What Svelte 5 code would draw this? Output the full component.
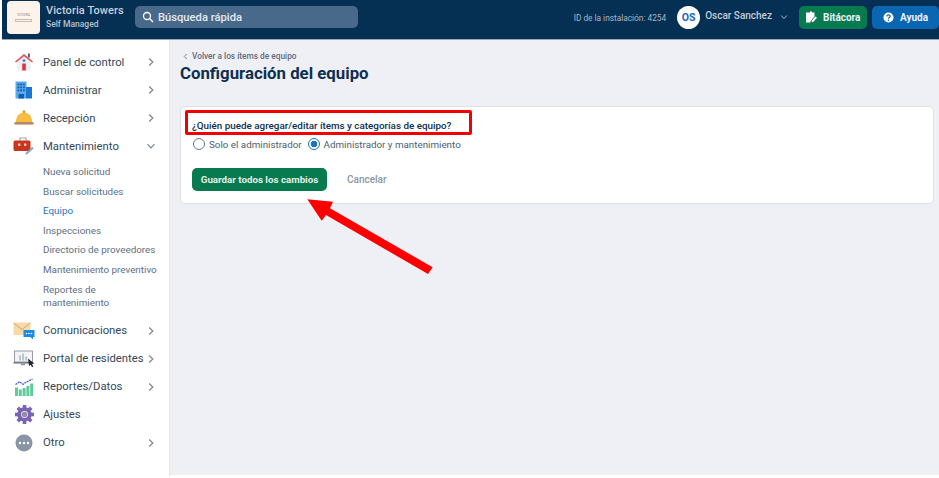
<script>
  const sub = [
    { label: 'Nueva solicitud' },
    { label: 'Buscar solicitudes' },
    { label: 'Equipo', active: true },
    { label: 'Inspecciones' },
    { label: 'Directorio de proveedores' },
    { label: 'Mantenimiento preventivo' },
    { label: 'Reportes de mantenimiento' }
  ];
</script>

{#snippet chevron(open = false)}
  <svg class="chev" class:open viewBox="0 0 10 10" width="10" height="10">
    <path d="M3.2 1.5 L6.8 5 L3.2 8.5" fill="none" stroke="#7b8794" stroke-width="1.2" />
  </svg>
{/snippet}

{#snippet navRow(label, arrow, open, icon)}
  <div class="nav-row">
    <span class="nav-icon">{@render icon()}</span>
    <span class="nav-label">{label}</span>
    {#if arrow}{@render chevron(open)}{/if}
  </div>
{/snippet}

{#snippet homeIcon()}
  <svg viewBox="0 0 20 18" width="20" height="18">
    <rect x="14" y="0.5" width="1.8" height="4" fill="#555" />
    <path d="M3.5 8 L10 2.5 L16.5 8 V17.5 H3.5 Z" fill="#eef0f2" />
    <path d="M1 8.4 L10 1 L19 8.4 L18 9.6 L10 3.2 L2 9.6 Z" fill="#e2505c" />
    <rect x="8.2" y="10.5" width="3.6" height="7" fill="#df3341" />
    <circle cx="10" cy="7.6" r="1.4" fill="#2c86d1" />
  </svg>
{/snippet}
{#snippet buildingIcon()}
  <svg viewBox="0 0 18 18" width="18" height="18">
    <rect x="0.5" y="0.5" width="11" height="17" fill="#5aa9ea" />
    <rect x="11" y="6" width="6" height="11.5" fill="#1976d2" />
    <g fill="#0f5fae">
      <rect x="2.5" y="2.5" width="1.8" height="1.8" /><rect x="5.2" y="2.5" width="1.8" height="1.8" /><rect x="8" y="2.5" width="1.8" height="1.8" />
      <rect x="2.5" y="5.5" width="1.8" height="1.8" /><rect x="5.2" y="5.5" width="1.8" height="1.8" /><rect x="8" y="5.5" width="1.8" height="1.8" />
      <rect x="2.5" y="8.5" width="1.8" height="1.8" /><rect x="5.2" y="8.5" width="1.8" height="1.8" /><rect x="8" y="8.5" width="1.8" height="1.8" />
      <rect x="3.5" y="13" width="5.5" height="4.5" />
    </g>
  </svg>
{/snippet}
{#snippet bellIcon()}
  <svg viewBox="0 0 20 16" width="20" height="16">
    <rect x="8.8" y="0.5" width="2.4" height="2.5" fill="#c99526" />
    <path d="M2 12 C2 6 5.5 2.6 10 2.6 C14.5 2.6 18 6 18 12 Z" fill="#f6bd41" />
    <rect x="0.5" y="12" width="19" height="2.6" fill="#b98a66" />
  </svg>
{/snippet}
{#snippet toolboxIcon()}
  <svg viewBox="0 0 22 18" width="22" height="18">
    <path d="M7 3.5 V1 H13 V3.5" fill="none" stroke="#9aa7b5" stroke-width="1.2" />
    <rect x="0.5" y="3.5" width="17" height="10.5" rx="1.5" fill="#c9341f" />
    <rect x="5" y="6.5" width="2.4" height="2.4" fill="#f2c9b8" />
    <rect x="11" y="6.5" width="2.4" height="2.4" fill="#f2c9b8" />
    <path d="M13 17 L20 10.5" stroke="#8fa6bf" stroke-width="2.2" />
  </svg>
{/snippet}
{#snippet mailIcon()}
  <svg viewBox="0 0 22 18" width="22" height="18">
    <rect x="0.5" y="0.5" width="17" height="12.5" fill="#f8d9a8" />
    <path d="M0.5 1 L9 7.5 L17.5 1" fill="none" stroke="#c9a26e" stroke-width="0.9" />
    <path d="M10.5 8 H21.5 V15 H20 V17.5 L17.5 15 H10.5 Z" fill="#1a8ae5" />
    <g fill="#fff"><circle cx="13.5" cy="11.5" r="0.8" /><circle cx="16" cy="11.5" r="0.8" /><circle cx="18.5" cy="11.5" r="0.8" /></g>
  </svg>
{/snippet}
{#snippet portalIcon()}
  <svg viewBox="0 0 22 18" width="22" height="18">
    <rect x="1.5" y="1" width="18" height="11" fill="#f3f4f6" stroke="#8a929b" stroke-width="0.9" />
    <g fill="#bcc4cd"><rect x="6" y="5.5" width="2" height="5" /><rect x="9" y="3.5" width="2" height="7" /><rect x="12" y="6.5" width="2" height="4" /></g>
    <rect x="0.5" y="12" width="20" height="1.6" fill="#77808a" />
    <rect x="8" y="13.6" width="4" height="1.6" fill="#8a929b" />
    <path d="M15 8.5 L21 13.5 L19 14 L20.3 16.6 L19 17.2 L17.7 14.7 L16 16 Z" fill="#20262c" />
  </svg>
{/snippet}
{#snippet chartIcon()}
  <svg viewBox="0 0 20 18" width="20" height="18">
    <g fill="#5fcb9c">
      <rect x="1" y="9.5" width="3" height="8.5" /><rect x="4.8" y="11.5" width="3" height="6.5" /><rect x="8.6" y="10" width="3" height="8" />
      <rect x="12.4" y="8" width="3" height="10" /><rect x="16.2" y="5.5" width="3" height="12.5" />
    </g>
    <path d="M1.5 6.5 L5.5 3.8 L9 6.2 L13.5 3.5 L18.5 1" fill="none" stroke="#2f55c0" stroke-width="1.2" stroke-dasharray="2 0.7" />
  </svg>
{/snippet}
{#snippet gearIcon()}
  <svg viewBox="0 0 20 20" width="19" height="19">
    <circle cx="10" cy="10" r="5.6" fill="#f2eff8" stroke="#7a62b4" stroke-width="4" />
    <circle cx="10" cy="10" r="2.8" fill="#3f3a5c" opacity="0.55" />
    <g stroke="#7a62b4" stroke-width="3.8">
      <path d="M10 0 V4" /><path d="M10 16 V20" /><path d="M0 10 H4" /><path d="M16 10 H20" />
      <path d="M2.9 2.9 L5.8 5.8" /><path d="M14.2 14.2 L17.1 17.1" /><path d="M2.9 17.1 L5.8 14.2" /><path d="M14.2 5.8 L17.1 2.9" />
    </g>
  </svg>
{/snippet}
{#snippet dotsIcon()}
  <svg viewBox="0 0 18 18" width="18" height="18">
    <circle cx="9" cy="9" r="8.5" fill="#8995a5" />
    <g fill="#fff"><circle cx="5" cy="9" r="1.2" /><circle cx="9" cy="9" r="1.2" /><circle cx="13" cy="9" r="1.2" /></g>
  </svg>
{/snippet}

<div class="page">
  <header class="topbar">
    <div class="logo">
      <span class="logo-name">VICTORIA</span>
      <span class="logo-sub"></span>
    </div>
    <div class="org">
      <div class="org-name">Victoria Towers</div>
      <div class="org-type">Self Managed</div>
    </div>
    <div class="search">
      <svg viewBox="0 0 12 12" width="12" height="12">
        <circle cx="5" cy="5" r="3.5" fill="none" stroke="#fff" stroke-width="1.3" />
        <path d="M7.6 7.6 L11 11" stroke="#fff" stroke-width="1.4" />
      </svg>
      <span>Búsqueda rápida</span>
    </div>
    <div class="spacer"></div>
    <span class="install">ID de la instalación: 4254</span>
    <span class="avatar">OS</span>
    <span class="user">Oscar Sanchez</span>
    <svg class="user-chev" viewBox="0 0 10 10" width="8" height="8">
      <path d="M1.5 3.2 L5 6.8 L8.5 3.2" fill="none" stroke="#b9c4d0" stroke-width="1.2" />
    </svg>
    <div class="btn-top green">
      <svg viewBox="0 0 12 12" width="12" height="12">
        <path d="M1 1.5 H5 V0.6 H7 V1.5 H9.5 V5.5 L5.5 10 V11.5 H1 Z" fill="#fff" />
        <path d="M6.6 11.3 L7 9.2 L10.6 5.4 L12 6.8 L8.4 10.7 Z" fill="#fff" />
      </svg>
      <span>Bitácora</span>
    </div>
    <div class="btn-top blue">
      <svg viewBox="0 0 12 12" width="11" height="11">
        <circle cx="6" cy="6" r="5.5" fill="#fff" />
        <path d="M4.2 4.8 C4.2 2.6 7.9 2.6 7.9 4.7 C7.9 6 6 6 6 7.4" fill="none" stroke="#0b66b2" stroke-width="1.3" />
        <circle cx="6" cy="9.1" r="0.8" fill="#0b66b2" />
      </svg>
      <span>Ayuda</span>
    </div>
  </header>

  <div class="body">
    <aside class="sidebar">
      {@render navRow('Panel de control', true, false, homeIcon)}
      {@render navRow('Administrar', true, false, buildingIcon)}
      {@render navRow('Recepción', true, false, bellIcon)}
      {@render navRow('Mantenimiento', true, true, toolboxIcon)}
      <ul class="subnav">
        {#each sub as item}
          <li class:active={item.active}>{item.label}</li>
        {/each}
      </ul>
      {@render navRow('Comunicaciones', true, false, mailIcon)}
      {@render navRow('Portal de residentes', true, false, portalIcon)}
      {@render navRow('Reportes/Datos', true, false, chartIcon)}
      {@render navRow('Ajustes', false, false, gearIcon)}
      {@render navRow('Otro', true, false, dotsIcon)}
    </aside>

    <main class="content">
      <div class="back">
        <svg viewBox="0 0 6 8" width="5" height="7">
          <path d="M4.5 1 L1.5 4 L4.5 7" fill="none" stroke="#5f6b7a" stroke-width="1" />
        </svg>
        <span>Volver a los ítems de equipo</span>
      </div>
      <h1>Configuración del equipo</h1>
      <section class="card">
        <p class="question">¿Quién puede agregar/editar ítems y categorías de equipo?</p>
        <div class="radios">
          <span class="radio"></span>
          <span class="radio-label">Solo el administrador</span>
          <span class="radio checked"></span>
          <span class="radio-label">Administrador y mantenimiento</span>
        </div>
        <div class="actions">
          <div class="save">Guardar todos los cambios</div>
          <div class="cancel">Cancelar</div>
        </div>
      </section>
    </main>
  </div>

  <div class="callout"></div>
  <svg class="arrow" viewBox="0 0 939 478" width="939" height="478">
    <path d="M307.3 199.3 L333 201.7 L330 208.3 L432.7 267.3 L428 274 L326 215 L321.7 220.7 Z" fill="#fe0000" />
  </svg>
</div>

<style>
  :global(body) {
    margin: 0;
    background: #fff;
  }

  .page {
    position: relative;
    width: 939px;
    height: 478px;
    overflow: hidden;
    font-family: Roboto, "Liberation Sans", sans-serif;
    background: #fff;
  }

  .topbar {
    display: flex;
    align-items: center;
    height: 34px;
    margin-left: 2px;
    padding-bottom: 5px;
    background: #062f54;
    border-bottom: 1px solid #9aa7b4;
    box-sizing: content-box;
  }

  .logo {
    display: flex;
    flex-direction: column;
    align-items: center;
    justify-content: center;
    gap: 2px;
    box-sizing: border-box;
    width: 33px;
    height: 33px;
    margin-left: 5px;
    background: #fdf3ea;
    border-radius: 4px;
  }

  .logo-name {
    font-size: 3px;
    color: #8b8580;
  }

  .logo-sub {
    width: 17px;
    height: 3px;
    border: 1px solid #c9bdb3;
    box-sizing: border-box;
  }

  .org {
    width: 89px;
    margin-left: 6px;
  }

  .org-name {
    font-size: 11px;
    font-weight: 500;
    color: #c6d0da;
    letter-spacing: 0.1px;
    line-height: 14px;
  }

  .org-type {
    font-size: 8.5px;
    font-weight: 500;
    color: #b6c2ce;
    line-height: 13px;
  }

  .search {
    display: flex;
    align-items: center;
    gap: 4px;
    box-sizing: border-box;
    width: 223px;
    height: 22px;
    padding-left: 7px;
    background: #48698a;
    border-radius: 5px;
    color: #e4e9ef;
    font-size: 11.2px;
    font-weight: 500;
  }

  .spacer {
    flex: 1;
  }

  .install {
    font-size: 8.3px;
    color: #a9b6c3;
    margin-top: 2px;
  }

  .avatar {
    display: flex;
    align-items: center;
    justify-content: center;
    width: 23px;
    height: 23px;
    margin-left: 11px;
    border-radius: 50%;
    background: #fff;
    color: #1769b5;
    font-size: 10.5px;
    font-weight: 700;
  }

  .user {
    margin-left: 5px;
    font-size: 10px;
    font-weight: 500;
    color: #c3cdd8;
    margin-top: -3px;
  }

  .user-chev {
    margin: 0 11px 0 8px;
  }

  .btn-top {
    display: flex;
    align-items: center;
    gap: 6px;
    box-sizing: border-box;
    height: 23px;
    border-radius: 5px;
    color: #e9f1f6;
    font-size: 10px;
    font-weight: 700;
  }

  .btn-top.green {
    width: 68px;
    padding-left: 6px;
    background: #077a4f;
  }

  .btn-top.blue {
    width: 67px;
    margin-left: 5px;
    padding-left: 11px;
    background: #0b66b2;
  }

  .body {
    display: flex;
    height: 436px;
  }

  .sidebar {
    box-sizing: border-box;
    width: 170px;
    padding-top: 8px;
    background: #fff;
    border-right: 1px solid #e3e5ea;
  }

  .nav-row {
    display: flex;
    align-items: center;
    height: 28px;
    padding-left: 13px;
    box-sizing: border-box;
  }

  .nav-icon {
    display: flex;
    justify-content: center;
    flex: none;
    width: 22px;
    margin-right: 8px;
  }

  .nav-label {
    font-size: 11.3px;
    color: #33475b;
    white-space: nowrap;
  }

  .chev {
    position: absolute;
    left: 146px;
  }

  .chev.open {
    transform: rotate(90deg);
  }

  .subnav {
    list-style: none;
    margin: 0;
    padding: 2px 10px 4px 43px;
  }

  .subnav li {
    padding: 3px 0;
    font-size: 9.85px;
    line-height: 13.6px;
    color: #5c6f82;
  }

  .subnav li.active {
    color: #1a76bd;
  }

  .content {
    flex: 1;
    height: 435px;
    box-sizing: border-box;
    padding: 11px 5px 0 10px;
    background: #eff0f5;
  }

  .back {
    display: flex;
    align-items: center;
    gap: 4px;
    padding-left: 3px;
    font-size: 8.3px;
    font-weight: 500;
    line-height: 10px;
    color: #5f6b7a;
  }

  h1 {
    margin: 1px 0 0;
    font-size: 16.8px;
    font-weight: 700;
    line-height: 22px;
    color: #0e2f4e;
  }

  .card {
    box-sizing: border-box;
    height: 98px;
    margin-top: 22px;
    padding: 12px 11px 0;
    background: #fff;
    border: 1px solid #dfe1e7;
    border-radius: 5px;
  }

  .question {
    margin: 0;
    font-size: 9.85px;
    font-weight: 500;
    line-height: 13px;
    color: #0e2f4e;
  }

  .radios {
    display: flex;
    align-items: center;
    height: 14px;
    margin-top: 5px;
    padding-left: 1px;
  }

  .radio {
    box-sizing: border-box;
    width: 12px;
    height: 12px;
    border: 1.2px solid #6e7a86;
    border-radius: 50%;
    background: #fff;
  }

  .radio.checked {
    border-color: #1a76bd;
    background: radial-gradient(circle, #1a76bd 0 3px, #fff 3.6px);
  }

  .radio-label {
    margin: 0 6px 0 4px;
    font-size: 9.8px;
    color: #4d5e6f;
    white-space: nowrap;
  }

  .actions {
    display: flex;
    align-items: center;
    margin-top: 17px;
  }

  .save {
    display: flex;
    align-items: center;
    justify-content: center;
    width: 135px;
    height: 23px;
    border-radius: 5px;
    background: #077a4f;
    color: #e3efe9;
    font-size: 9.75px;
    font-weight: 700;
  }

  .cancel {
    margin-left: 20px;
    font-size: 10px;
    font-weight: 500;
    color: #8b96a1;
  }

  .callout {
    position: absolute;
    left: 185px;
    top: 110px;
    box-sizing: border-box;
    width: 287px;
    height: 25px;
    border: 3px solid #f00000;
    border-radius: 2px;
  }

  .arrow {
    position: absolute;
    left: 0;
    top: 0;
    pointer-events: none;
  }
</style>
